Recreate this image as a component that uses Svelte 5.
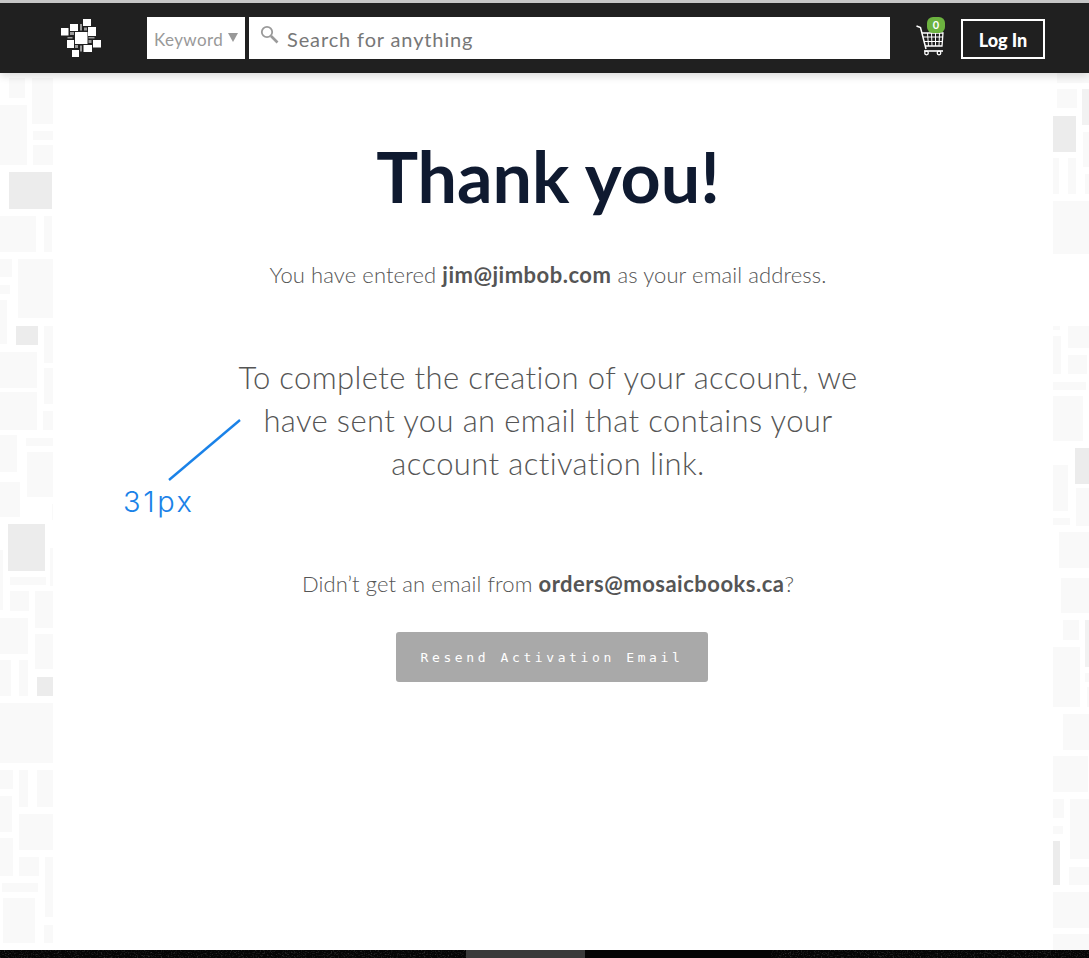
<script>
  // page-coordinate tiles: [x, y, w, h, shade]
  const leftTiles = [
    [9,78,16,20],[32,78,21,46],[0,105,27,60],[33,131,20,9],[33,145,20,20],[9,172,43,37,1],
    [0,216,36,36],[44,216,8,36],[0,259,12,18],[0,285,10,9],[0,300,7,44],[18,259,35,59],
    [16,326,22,19,1],[44,326,9,37],[0,352,37,36],[44,368,9,36],[0,392,37,38],[43,411,10,19],
    [0,435,17,37],[26,438,27,8],[27,452,26,45],[0,482,20,35],[52,504,1,16],[8,524,37,47,1],
    [50,548,3,38],[0,550,3,60],[10,577,36,8],[10,591,19,20],[35,591,18,37],[0,618,28,36],
    [35,634,18,35],[0,660,11,36],[19,660,9,36],[37,677,16,19,1],[0,703,53,60],[0,770,13,19],
    [19,770,9,37],[37,770,16,37],[0,796,12,36],[19,814,34,36],[0,838,13,38],[19,857,20,19],
    [45,857,8,60],[2,883,36,9],[3,898,32,45],[44,925,9,18]
  ];
  const rightTiles = [
    [1057,73,32,10],[1057,89,20,19],[1082,89,7,36,2],[1053,116,23,36,1],[1083,132,6,35],
    [1053,158,6,36],[1068,158,8,36],[1085,174,4,20],[1053,201,36,53],[1053,326,7,4],
    [1053,336,8,38],[1068,326,21,22],[1068,355,19,19],[1053,382,33,8],[1053,396,30,45],
    [1075,448,14,36,1],[1053,465,15,46],[1076,488,13,38],[1053,518,17,7],[1059,532,30,36],
    [1061,578,28,35],[1063,620,16,20],[1085,620,4,47,2],[1053,647,27,60],[1085,673,4,9],
    [1087,687,2,20],[1063,714,26,36],[1053,756,35,36],[1053,799,11,19],[1070,799,19,60],
    [1053,826,10,8],[1053,841,7,44,1],[1069,867,20,18],[1053,892,36,36],[1053,934,36,16]
  ];
  const shades = ["#f9f9f9", "#ececec", "#f2f2f2"];

  const logoTiles = [
    [75,32,12.5,12],[70,24,8,7],[83,19,8,7],[88,27,8,9],[61,28,7.5,7.5],[93,40,8,7.5],[67,40,7,8],
    [83.5,45,8.5,7],[72,50,7,7]
  ];
  const logoBits = [
    [80,24,2,6.5],[84,27.5,3,3],[67.5,37,5,1.5],[88.5,37,6,1.5],[88.5,40,3,3],
    [70,32,4,3],[75,45,3,3],[80,45.5,2,6]
  ];
</script>

<div class="page">
  <header class="topbar">
    <svg class="logo" width="40" height="38" viewBox="61 19 40 38">
      {#each logoBits as t}
        <rect x={t[0]} y={t[1]} width={t[2]} height={t[3]} fill="#9a9a9a" />
      {/each}
      {#each logoTiles as t}
        <rect x={t[0]} y={t[1]} width={t[2]} height={t[3]} fill="#fff" />
      {/each}
    </svg>
    <div class="search">
      <div class="kind">Keyword <span class="caret"></span></div>
      <div class="field">
        <svg width="19" height="19" viewBox="0 0 19 19" fill="none" stroke="#9a9a9a">
          <circle cx="7" cy="7" r="5.2" stroke-width="1.8" />
          <path d="M11 11l6.5 6.5" stroke-width="2.6" />
        </svg>
        <span>Search for anything</span>
      </div>
    </div>
    <div class="cart">
      <svg width="30" height="36" viewBox="0 0 30 36" fill="none" stroke="#fff">
        <path d="M0.5 6l4 1.5 5.5 21.5" stroke-width="1.5" />
        <path d="M6 13h21l-1 13H9.5" stroke-width="1.3" />
        <path d="M7 17h20M8 21.5h18.5M11.5 13l1 13M15.5 13l.5 13M19.5 13v13M23.5 13l-.5 13" stroke-width="1" />
        <path d="M8 31h19" stroke-width="1.6" />
        <circle cx="10.5" cy="33" r="1.8" stroke-width="1.3" />
        <circle cx="23" cy="33" r="1.8" stroke-width="1.3" />
      </svg>
      <span class="badge">0</span>
    </div>
    <button class="login">Log In</button>
  </header>

  <div class="body">
    <svg class="side" width="53" height="877" viewBox="0 73 53 877">
      {#each leftTiles as t}
        <rect x={t[0]} y={t[1]} width={t[2]} height={t[3]} fill={shades[t[4] || 0]} />
      {/each}
    </svg>

    <main>
      <h1>Thank you!</h1>
      <p class="small">You have entered <b>jim@jimbob.com</b> as your email address.</p>
      <div class="lead-wrap">
        <p class="lead">To complete the creation of your account, we have sent you an email that contains your account activation link.</p>
        <div class="note">
          <svg width="75" height="64" viewBox="0 0 75 64">
            <path d="M2 62L73 2" stroke="#1a82e8" stroke-width="2.4" fill="none" />
          </svg>
          <span>31px</span>
        </div>
      </div>
      <p class="small again">Didn’t get an email from <b>orders@mosaicbooks.ca</b>?</p>
      <button class="resend">Resend Activation Email</button>
    </main>

    <svg class="side" width="36" height="877" viewBox="1053 73 36 877">
      {#each rightTiles as t}
        <rect x={t[0]} y={t[1]} width={t[2]} height={t[3]} fill={shades[t[4] || 0]} />
      {/each}
    </svg>
  </div>

  <svg class="strip" width="1089" height="8" viewBox="0 0 1089 8">
    <filter id="grain">
      <feTurbulence type="fractalNoise" baseFrequency="0.7 0.9" numOctaves="2" seed="4" />
      <feColorMatrix values="0 0 0 0 1  0 0 0 0 1  0 0 0 0 1  1.4 0 0 0 -0.72" />
    </filter>
    <rect width="1089" height="8" fill="#050505" />
    <rect width="466" height="8" filter="url(#grain)" opacity="0.35" />
    <rect x="800" width="289" height="8" filter="url(#grain)" opacity="0.35" />
    <rect x="466" width="119" height="8" fill="#3a3a3a" />
  </svg>
</div>

<style>
  :global(body) {
    background: #fff;
  }
  .page {
    width: 1089px;
    height: 958px;
    overflow: hidden;
    display: flex;
    flex-direction: column;
    font-family: Lato, "Open Sans", sans-serif;
    color: #555;
  }

  .topbar {
    position: relative;
    z-index: 1;
    flex: none;
    box-sizing: border-box;
    height: 73px;
    border-top: 3px solid #c6c6c6;
    background: #202020;
    box-shadow: 0 3px 8px rgba(0, 0, 0, 0.14);
    display: flex;
    align-items: center;
    padding: 0 44px 0 61px;
  }
  .logo {
    flex: none;
    margin-right: 46px;
  }
  .search {
    flex: none;
    display: flex;
    gap: 4px;
    height: 42px;
    margin-top: -1px;
  }
  .kind {
    width: 98px;
    box-sizing: border-box;
    padding-left: 7px;
    background: #fff;
    color: #999;
    font-size: 17px;
    letter-spacing: 0.4px;
    display: flex;
    align-items: center;
    gap: 5px;
    padding-top: 3px;
  }
  .caret {
    width: 0;
    height: 0;
    border-left: 5px solid transparent;
    border-right: 5px solid transparent;
    border-top: 9px solid #999;
    margin-top: -4px;
  }
  .field {
    width: 641px;
    box-sizing: border-box;
    background: #fff;
    display: flex;
    align-items: center;
    padding-left: 11px;
    color: #777;
    font-size: 20px;
    letter-spacing: 0.87px;
  }
  .field svg {
    margin: -7px 8px 0 0;
  }
  .field span {
    padding-top: 3px;
  }
  .cart {
    position: relative;
    flex: none;
    width: 30px;
    height: 36px;
    margin: 0 15px 0 26px;
  }
  .cart svg {
    display: block;
  }
  .badge {
    position: absolute;
    top: -3px;
    right: 1px;
    width: 18px;
    height: 16px;
    border-radius: 6px;
    background: #6cb33f;
    color: #fff;
    font-size: 11px;
    font-weight: 700;
    line-height: 16px;
    text-align: center;
  }
  .login {
    flex: none;
    width: 84px;
    height: 40px;
    margin-top: 2px;
    box-sizing: border-box;
    border: 2px solid #fff;
    background: transparent;
    color: #fff;
    font-family: inherit;
    font-size: 18px;
    font-weight: 900;
    padding: 2px 0 0;
  }

  .body {
    flex: 1;
    display: flex;
    min-height: 0;
  }
  .side {
    flex: none;
    display: block;
  }
  main {
    flex: 1;
    display: flex;
    flex-direction: column;
    align-items: center;
    padding-right: 10px;
  }
  h1 {
    margin: 62px 0 0;
    color: #0f1a30;
    font-size: 70px;
    line-height: 82px;
    font-weight: 700;
  }
  .small {
    margin: 0;
    font-size: 22px;
    line-height: 28px;
    font-weight: 300;
    letter-spacing: 0.1px;
  }
  .small b {
    font-weight: 700;
    letter-spacing: 0.5px;
  }
  main > .small:first-of-type {
    margin-top: 44px;
  }
  .lead-wrap {
    position: relative;
    margin-top: 67px;
  }
  .lead {
    margin: 0;
    width: 640px;
    font-size: 31px;
    line-height: 43px;
    font-weight: 300;
    letter-spacing: 0.38px;
    text-align: center;
  }
  .note {
    position: absolute;
    left: -61px;
    top: 62px;
  }
  .note svg {
    display: block;
  }
  .note span {
    position: absolute;
    left: -44px;
    top: 66px;
    color: #1a82e8;
    font-family: Inter, sans-serif;
    font-size: 29px;
    font-weight: 300;
    letter-spacing: 2.6px;
    line-height: 36px;
  }
  .again {
    margin-top: 85px;
  }
  .resend {
    margin: 34px 0 0 8px;
    width: 312px;
    height: 50px;
    border: 0;
    border-radius: 3px;
    background: #a9a9a9;
    color: #fff;
    font-family: "DejaVu Sans Mono", monospace;
    font-size: 13px;
    letter-spacing: 3.6px;
  }

  .strip {
    flex: none;
    display: block;
  }
</style>
